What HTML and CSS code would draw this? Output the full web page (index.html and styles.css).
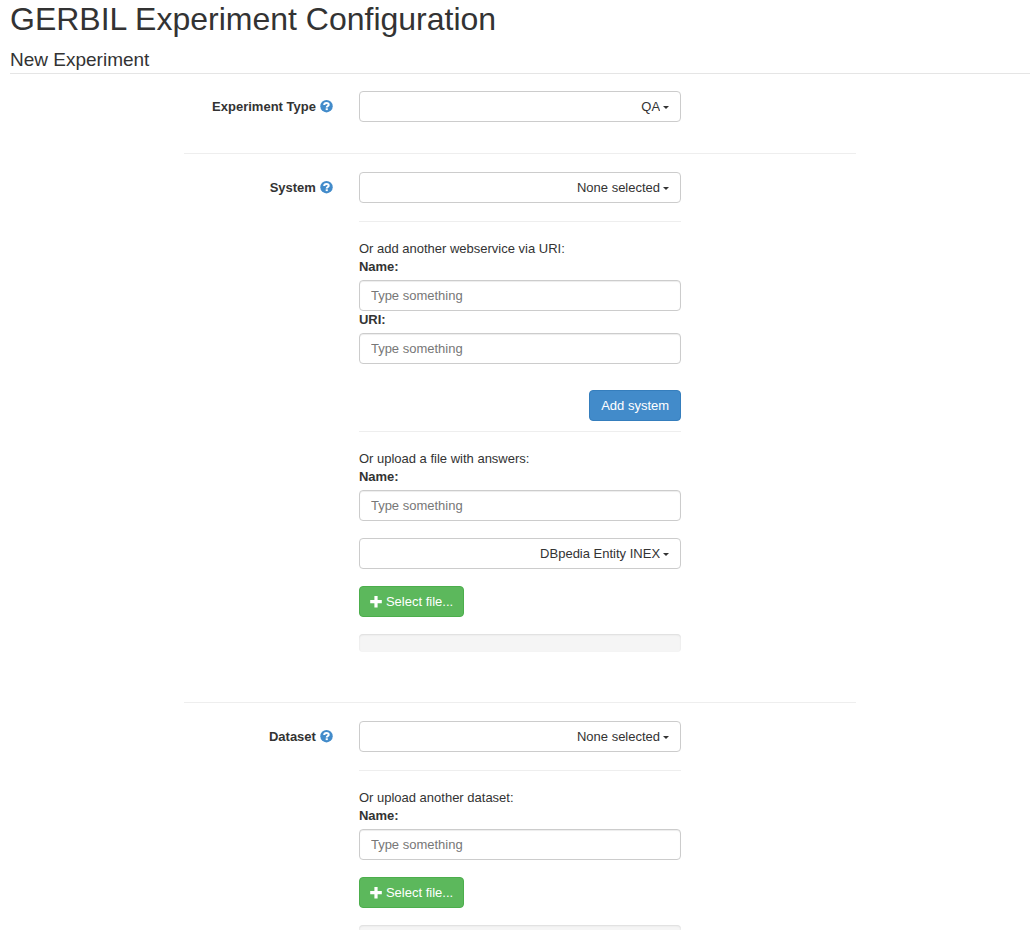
FILE: index.html
```html
<!DOCTYPE html>
<html lang="en">
<head>
<meta charset="utf-8">
<meta name="viewport" content="width=device-width, initial-scale=1">
<title>GERBIL Experiment Configuration</title>
<link rel="stylesheet" href="styles.css">
</head>
<body>
<svg class="sprite" aria-hidden="true">
  <symbol id="icon-help" viewBox="0 0 13 13">
    <circle cx="6.5" cy="6.2" r="6.2" fill="#428bca"/>
    <path d="M4.2 5C4.2 3.5 5.1 2.9 6.5 2.9S8.7 3.6 8.7 4.7C8.7 6.1 6.7 6 6.7 7.6" fill="none" stroke="#fff" stroke-width="2"/>
    <rect x="5.7" y="8.3" width="2.1" height="1.8" fill="#fff"/>
  </symbol>
  <symbol id="icon-plus" viewBox="0 0 12 12">
    <path d="M4.4 0h3.2v4h4.2v3.2H7.6v4.2H4.4V7.2H0.2V4h4.2z" fill="#fff"/>
  </symbol>
</svg>
<main class="page">
  <h1 class="title">GERBIL Experiment Configuration</h1>
  <h2 class="legend">New Experiment</h2>
  <form class="form">
    <section class="group">
      <label class="group-label" for="type">Experiment Type <svg class="help"><use href="#icon-help"/></svg></label>
      <div class="controls">
        <div class="dropdown"><select class="control" id="type"><option>QA</option></select></div>
      </div>
    </section>
    <hr class="rule">
    <section class="group group-tall">
      <label class="group-label" for="system">System <svg class="help"><use href="#icon-help"/></svg></label>
      <div class="controls">
        <div class="dropdown"><select class="control" id="system"><option>None selected</option></select></div>
        <hr class="rule">
        <p class="hint">Or add another webservice via URI:</p>
        <label class="field-label" for="service-name">Name:</label>
        <input class="control" id="service-name" type="text" placeholder="Type something">
        <label class="field-label" for="service-uri">URI:</label>
        <input class="control" id="service-uri" type="text" placeholder="Type something">
        <div class="actions"><button class="btn btn-primary" type="button">Add system</button></div>
        <hr class="rule rule-close">
        <p class="hint">Or upload a file with answers:</p>
        <label class="field-label" for="answers-name">Name:</label>
        <div class="stack">
          <input class="control" id="answers-name" type="text" placeholder="Type something">
          <div class="dropdown"><select class="control" aria-label="Answers dataset"><option>DBpedia Entity INEX</option></select></div>
          <button class="btn btn-success" type="button"><svg class="plus"><use href="#icon-plus"/></svg>Select file...</button>
          <div class="progress" role="progressbar" aria-label="Upload progress"></div>
        </div>
      </div>
    </section>
    <hr class="rule">
    <section class="group">
      <label class="group-label" for="dataset">Dataset <svg class="help"><use href="#icon-help"/></svg></label>
      <div class="controls">
        <div class="dropdown"><select class="control" id="dataset"><option>None selected</option></select></div>
        <hr class="rule">
        <p class="hint">Or upload another dataset:</p>
        <label class="field-label" for="dataset-name">Name:</label>
        <div class="stack">
          <input class="control" id="dataset-name" type="text" placeholder="Type something">
          <button class="btn btn-success" type="button"><svg class="plus"><use href="#icon-plus"/></svg>Select file...</button>
          <div class="progress" role="progressbar" aria-label="Upload progress"></div>
        </div>
      </div>
    </section>
  </form>
</main>
</body>
</html>
```
FILE: styles.css
```css
* {
  box-sizing: border-box;
}

body {
  margin: 0;
  background: #fff;
  color: #333;
  font-family: "Liberation Sans", Arial, sans-serif;
  font-size: 13px;
  line-height: 18px;
}

.sprite {
  display: none;
}

.page {
  padding: 0 5px 0 10px;
}

.title {
  margin: 0 0 9px;
  font-size: 32px;
  font-weight: 400;
  line-height: 38px;
}

.legend {
  margin: 0 0 17px;
  border-bottom: 1px solid #e5e5e5;
  font-size: 19px;
  font-weight: 400;
  line-height: 26px;
}

.form {
  width: calc(66% - 2px);
  margin: 0 auto;
}

.group {
  display: grid;
  grid-template-columns: 26% 48%;
  padding-bottom: 31px;
}

.group-tall {
  padding-bottom: 50px;
}

.group + .rule {
  margin-top: 0;
}

.group-label {
  display: flex;
  align-items: center;
  justify-content: flex-end;
  gap: 4px;
  height: 31px;
  padding-right: 26px;
  font-weight: 700;
}

.help {
  width: 13px;
  height: 13px;
}

.rule {
  margin: 18px 0;
  border: 0;
  border-top: 1px solid #eee;
}

.rule-close {
  margin-top: 10px;
}

.hint {
  margin: 0;
}

.field-label {
  display: block;
  margin-bottom: 4px;
  font-weight: 700;
}

.control {
  display: block;
  width: 100%;
  height: 31px;
  padding: 5px 11px;
  border: 1px solid #ccc;
  border-radius: 4px;
  background: #fff;
  color: #333;
  font: inherit;
}

input.control {
  box-shadow: inset 0 1px 1px rgba(0, 0, 0, 0.075);
}

.control::placeholder {
  color: #777;
}

.dropdown {
  position: relative;
}

.dropdown select {
  padding-right: 20px;
  appearance: none;
  text-align: right;
  text-align-last: right;
}

.dropdown::after {
  content: "";
  position: absolute;
  top: 15px;
  right: 12px;
  border: 3px solid transparent;
  border-top-color: #333;
  border-bottom: 0;
  pointer-events: none;
}

.actions {
  display: flex;
  justify-content: flex-end;
  margin-top: 26px;
}

.stack {
  display: flex;
  flex-direction: column;
  gap: 17px;
}

.btn {
  display: flex;
  align-items: center;
  align-self: flex-start;
  gap: 4px;
  height: 31px;
  padding: 0 11px;
  border: 1px solid;
  border-radius: 4px;
  color: #fff;
  font: inherit;
}

.btn-primary {
  border-color: #357ebd;
  background: #428bca;
}

.btn-success {
  padding: 0 10px;
  border-color: #4cae4c;
  background: #5cb85c;
}

.plus {
  width: 12px;
  height: 12px;
}

.progress {
  height: 18px;
  border-radius: 4px;
  background: #f5f5f5;
  box-shadow: inset 0 1px 2px rgba(0, 0, 0, 0.1);
}
```
